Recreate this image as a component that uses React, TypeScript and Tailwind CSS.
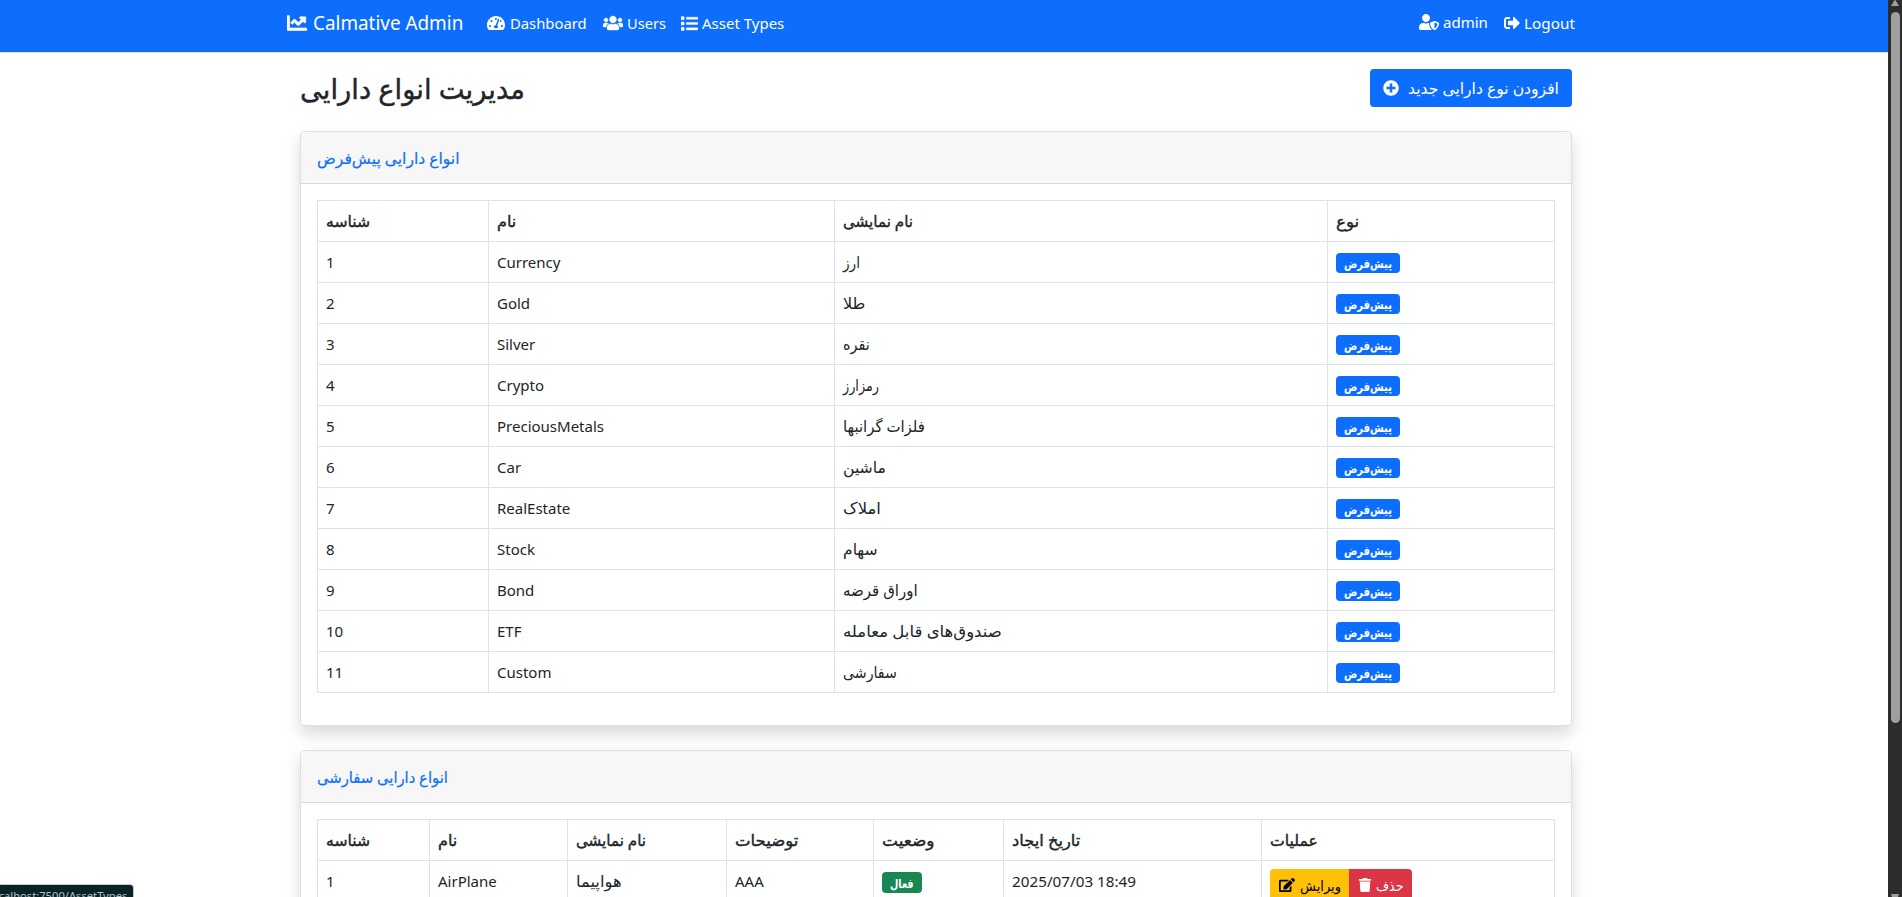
import React, { useLayoutEffect, useRef } from "react";
import { FaChartLine, FaTachometerAlt, FaUsers, FaList, FaUserShield, FaSignOutAlt, FaPlusCircle, FaEdit, FaTrash } from "react-icons/fa";

const defaults: [string, string, number][] = [
  ["Currency", "ارز", 17],
  ["Gold", "طلا", 22],
  ["Silver", "نقره", 27],
  ["Crypto", "رمزارز", 36],
  ["PreciousMetals", "فلزات گرانبها", 82],
  ["Car", "ماشین", 43],
  ["RealEstate", "املاک", 38],
  ["Stock", "سهام", 35],
  ["Bond", "اوراق قرضه", 75],
  ["ETF", "صندوق‌های قابل معامله", 159],
  ["Custom", "سفارشی", 54],
];

const cell = "h-[41px] border border-[#dee2e6] px-2 py-0 text-left align-middle";
const topCell = "border border-[#dee2e6] px-2 py-2 text-left align-top";

/* Text condensed or widened to an exact width. */
function Fit({ w, className = "", children }: { w: number; className?: string; children: string }) {
  const ref = useRef<HTMLSpanElement>(null);
  useLayoutEffect(() => {
    const el = ref.current;
    if (el) el.style.transform = `scaleX(${w / el.offsetWidth})`;
  }, [w]);
  return (
    <span className="inline-block whitespace-nowrap" style={{ width: w }}>
      <span ref={ref} className={`inline-block origin-left ${className}`}>{children}</span>
    </span>
  );
}

function Head({ w, children }: { w: number; children: string }) {
  return (
    <th className={cell}>
      <Fit w={w} className="text-base leading-6 font-normal [-webkit-text-stroke:0.4px_#212529]">{children}</Fit>
    </th>
  );
}

function Card({ title, w, children }: { title: string; w: number; children: React.ReactNode }) {
  return (
    <section className="mb-6 rounded-[4px] border border-[#dedfe0] bg-white shadow-[0_8px_16px_rgba(0,0,0,0.15)]">
      <h6 className="flex h-[52px] items-center rounded-t-[3px] border-b border-[#d9d9d9] bg-[#f7f7f7] px-4 text-base text-[#0d6efd] [-webkit-text-stroke:0.2px_#0d6efd]">
        <Fit w={w}>{title}</Fit>
      </h6>
      <div className="px-4 pt-4 pb-8">{children}</div>
    </section>
  );
}

function Navbar() {
  return (
    <nav className="flex h-[53px] shrink-0 justify-between border-b border-[#dee2e6] bg-[#0d6efd] pr-[313px] pl-[287px] text-[15px] text-white">
      <div className="flex h-[46px] items-center">
        <a className="flex items-center gap-[6px] text-[19px]"><FaChartLine className="size-5 [stroke-width:16]" /><Fit w={150}>Calmative Admin</Fit></a>
        <a className="ml-6 flex items-center gap-[5px]"><FaTachometerAlt className="size-[18px]" /><Fit w={77}>Dashboard</Fit></a>
        <a className="ml-4 flex items-center gap-1"><FaUsers className="size-5 [stroke-width:12]" /><Fit w={39}>Users</Fit></a>
        <a className="ml-[15px] flex items-center gap-1"><FaList className="size-[17px] [stroke-width:12]" /><Fit w={82}>Asset Types</Fit></a>
      </div>
      <div className="flex h-[46px] items-center">
        <span className="flex items-center gap-1 pb-0.5"><FaUserShield className="size-5" /><Fit w={45}>admin</Fit></span>
        <a className="ml-4 flex items-center gap-1"><FaSignOutAlt className="size-4" /><Fit w={51}>Logout</Fit></a>
      </div>
    </nav>
  );
}

export default function App() {
  return (
    <div className="relative flex h-[897px] w-[1902px] overflow-hidden bg-white font-['Noto_Sans','DejaVu_Sans',sans-serif] text-[15px] leading-6 text-[#212529]">
      <div className="flex w-[1888px] flex-col">
        <Navbar />
        <main className="pr-[316px] pl-[300px]">
          <header className="flex h-[78px] items-start justify-between pt-4">
            <h1 className="pt-px text-[28px] leading-9 [-webkit-text-stroke:0.4px_#212529]"><Fit w={225}>مدیریت انواع دارایی</Fit></h1>
            <button className="flex h-[38px] w-[202px] items-center gap-[9px] rounded-[4px] bg-[#0d6efd] pl-[13px] text-base text-white">
              <FaPlusCircle className="size-4" />
              <Fit w={151}>افزودن نوع دارایی جدید</Fit>
            </button>
          </header>
          <Card title="انواع دارایی پیش‌فرض" w={143}>
            <table className="w-[1238px] table-fixed border-collapse">
              <colgroup>
                <col className="w-[171px]" /><col className="w-[346px]" /><col className="w-[493px]" /><col />
              </colgroup>
              <thead>
                <tr>
                  <Head w={44}>شناسه</Head><Head w={19}>نام</Head><Head w={70}>نام نمایشی</Head><Head w={23}>نوع</Head>
                </tr>
              </thead>
              <tbody>
                {defaults.map(([name, label, w], i) => (
                  <tr key={name}>
                    <td className={cell}>{i + 1}</td>
                    <td className={cell}>{name}</td>
                    <td className={cell}><Fit w={w} className="text-base leading-6">{label}</Fit></td>
                    <td className={cell}>
                      <span className="mt-px flex h-5 w-16 items-center justify-center rounded-[4px] bg-[#0d6efd] pt-[3px] text-[12px] font-bold text-white"><Fit w={48}>پیش‌فرض</Fit></span>
                    </td>
                  </tr>
                ))}
              </tbody>
            </table>
          </Card>
          <Card title="انواع دارایی سفارشی" w={131}>
            <table className="w-[1238px] table-fixed border-collapse">
              <colgroup>
                <col className="w-[112px]" /><col className="w-[138px]" /><col className="w-[159px]" /><col className="w-[147px]" /><col className="w-[130px]" /><col className="w-[258px]" /><col />
              </colgroup>
              <thead>
                <tr>
                  <Head w={44}>شناسه</Head><Head w={19}>نام</Head><Head w={70}>نام نمایشی</Head><Head w={63}>توضیحات</Head>
                  <Head w={53}>وضعیت</Head><Head w={68}>تاریخ ایجاد</Head><Head w={48}>عملیات</Head>
                </tr>
              </thead>
              <tbody>
                <tr>
                  <td className={topCell}>1</td>
                  <td className={topCell}>AirPlane</td>
                  <td className={topCell}><Fit w={46} className="text-base leading-6">هواپیما</Fit></td>
                  <td className={topCell}>AAA</td>
                  <td className={topCell}>
                    <span className="mt-[3px] flex h-[21px] w-10 items-center justify-center rounded-[4px] bg-[#198754] pt-0.5 text-[12px] font-bold text-white"><Fit w={24}>فعال</Fit></span>
                  </td>
                  <td className={topCell}><Fit w={124}>2025/07/03 18:49</Fit></td>
                  <td className={topCell}>
                    <div className="flex h-[31px] text-[14px]">
                      <button className="flex w-[79px] items-center gap-[5px] rounded-l-[4px] bg-[#ffc107] pl-[9px] text-black"><FaEdit className="size-4" /><span className="pt-0.5"><Fit w={41}>ویرایش</Fit></span></button>
                      <button className="flex w-[63px] items-center gap-1 rounded-r-[4px] bg-[#dc3545] pl-[9px] text-white"><FaTrash className="size-3.5" /><span className="pt-0.5"><Fit w={28}>حذف</Fit></span></button>
                    </div>
                  </td>
                </tr>
              </tbody>
            </table>
          </Card>
        </main>
      </div>
      <div className="flex w-3.5 flex-col items-center bg-[#2c2c2c]">
        <svg className="h-3 w-3.5" viewBox="0 0 14 12"><path d="M3 6 L6 1 Q7 -1 8 1 L11 6Z" fill="#9f9f9f" /></svg>
        <div className="h-[711px] w-[9px] rounded-full bg-[#9f9f9f]" />
        <svg className="mt-auto h-1 w-3.5" viewBox="0 0 14 4"><path d="M3 1H11L10 4H4Z" fill="#9f9f9f" /></svg>
      </div>
      <div className="absolute bottom-0 left-0 flex h-[13px] w-[134px] justify-end overflow-hidden rounded-tr-[4px] border-t border-r border-[#c5cbcb] bg-[#0a2226] pr-1.5 text-[11.5px] leading-[21px] whitespace-nowrap text-[#a9c4c8]"><Fit w={138}>localhost:7500/AssetTypes</Fit></div>
    </div>
  );
}
